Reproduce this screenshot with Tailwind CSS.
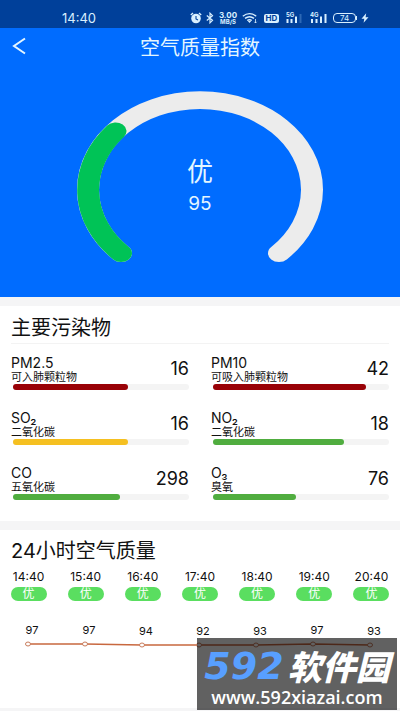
<!DOCTYPE html>
<html lang="zh-CN">
<head>
<meta charset="utf-8">
<meta name="viewport" content="width=device-width, initial-scale=1">
<title>空气质量指数</title>
<script src="https://cdn.jsdelivr.net/npm/@tailwindcss/browser@4"></script>
</head>
<body class="bg-[#f5f5f6] font-['Inter','Noto_Sans_CJK_SC',sans-serif] text-[#111]">
<div class="relative overflow-hidden">
  <!-- Status bar -->
  <div class="flex h-7 items-center justify-between bg-[#00409a] pt-2 pr-[31px] pl-[62px] text-[#d9f0ff]">
    <span class="text-[13px] leading-4">14:40</span>
    <div class="flex items-center">
      <svg class="mr-1 h-3 w-3" viewBox="0 0 12 12"><circle cx="6" cy="6.5" r="4.8" fill="currentColor"/><path d="M.8 3 3 1M11.2 3 9 1" stroke="currentColor" stroke-width="1.4"/><path d="M6 4v3l2 1" fill="none" stroke="#00409a" stroke-width="1.1"/></svg>
      <svg class="mr-1 h-3 w-2" viewBox="0 0 8 12"><path d="M.8 3.5 6.5 8.3 4 10.8V1.2l2.5 2.5L.8 8.5" fill="none" stroke="currentColor" stroke-width="1.2"/></svg>
      <div class="mr-1 w-5 text-center font-bold"><div class="text-[8px] leading-[7px]">3.00</div><div class="text-[6px] leading-[6px]">MB/S</div></div>
      <svg class="mr-[6px] h-3 w-4" viewBox="0 0 16 12"><path d="M.8 4.2Q7.5-1 14.2 4.2M3 6.4Q7.5 3 12 6.4M5.2 8.5Q7.5 7 9.8 8.5" fill="none" stroke="currentColor" stroke-width="1.4"/><path d="m5.8 9 1.7 2 1.7-2z" fill="currentColor"/><path d="M13.5 7v4M12.3 9.8l1.2 1.2 1.2-1.2" fill="none" stroke="currentColor" stroke-width=".8"/></svg>
      <div class="mr-[7px] h-[9px] w-[15px] rounded-xs bg-[#d9f0ff] text-center text-[8px] leading-[9px] font-bold text-[#00409a]">HD</div>
      <svg class="mr-2 h-3 w-4" viewBox="0 0 16 12"><text x="0" y="5" font-size="6" font-weight="700" fill="currentColor">5G</text><path d="M1.5 7v4M5.5 7v4M10 4.5V11" stroke="currentColor" stroke-width="2"/><path d="M14.5 2v9" stroke="#2d68b5" stroke-width="2"/></svg>
      <svg class="mr-[6px] h-3 w-[17px]" viewBox="0 0 17 12"><text x="0" y="5" font-size="6" font-weight="700" fill="currentColor">4G</text><path d="M2 7v4M6.5 7v4M11 4.5V11M15.500 2v9" stroke="currentColor" stroke-width="2"/></svg>
      <div class="h-[10px] w-[23px] rounded-sm border border-current text-center text-[8px] leading-[8px]">74</div>
      <div class="mr-1 h-1 w-px bg-current"></div>
      <svg class="h-[10px] w-2" viewBox="0 0 8 10"><path d="M5.200.3.5 5.700h2.800L2.600 9.700 7.500 4.200H4.600z" fill="currentColor"/></svg>
    </div>
  </div>

  <!-- Gauge -->
  <header class="bg-[#006cff] text-[#e4f6ff]">
    <div class="relative flex h-9 items-center justify-center">
      <button aria-label="返回" class="absolute left-3 h-5 w-4"><svg class="h-5 w-4" viewBox="0 0 16 20"><path d="M13 2.500 2 10l11 7.500" fill="none" stroke="currentColor" stroke-width="2"/></svg></button>
      <h1 class="pt-1 text-[20px] leading-8">空气质量指数</h1>
    </div>
    <div class="relative px-[77px] pt-7 pb-[34px]">
      <svg class="w-full overflow-visible" viewBox="0 0 246 171" fill="none" stroke-linecap="round" stroke-width="22">
        <g transform="translate(123 98) scale(1 .8)">
          <path d="M-79 79A112 112 0 1 1 79 79" stroke="#ececec"/>
          <path d="M-79 79A112 112 0 0 1-84.500-73.500" stroke="#00c356"/>
        </g>
      </svg>
      <div class="absolute inset-x-0 top-[90px] text-center">
        <div class="text-[26px] leading-9">优</div>
        <div class="text-[19px] leading-7">95</div>
      </div>
    </div>
  </header>

  <main class="flex flex-col gap-[9px] pt-[9px]">
    <section class="bg-white px-[11px] pb-[21px]">
      <h2 class="flex h-[38px] items-center border-b border-[#f3f3f3] pt-[6px] text-[20px] leading-8">主要污染物</h2>
      <div class="grid grid-cols-2 gap-x-[22px] gap-y-5 pt-[11px]">
        <div><div class="flex h-7 items-center justify-between"><div><div class="text-[14px] leading-4">PM2.5</div><div class="text-[11px] leading-3">可入肺颗粒物</div></div><div class="text-[18px] leading-6">16</div></div><div class="mt-px ml-[2px] h-[6px] rounded-sm bg-[#f4f4f4]"><div class="h-full rounded-full bg-[#990207]" style="width:65.5%"></div></div></div>
        <div><div class="flex h-7 items-center justify-between"><div><div class="text-[14px] leading-4">PM10</div><div class="text-[11px] leading-3">可吸入肺颗粒物</div></div><div class="text-[18px] leading-6">42</div></div><div class="mt-px ml-[2px] h-[6px] rounded-sm bg-[#f4f4f4]"><div class="h-full rounded-full bg-[#990207]" style="width:87%"></div></div></div>
        <div><div class="flex h-7 items-center justify-between"><div><div class="text-[14px] leading-4">SO₂</div><div class="text-[11px] leading-3">二氧化碳</div></div><div class="text-[18px] leading-6">16</div></div><div class="mt-px ml-[2px] h-[6px] rounded-sm bg-[#f4f4f4]"><div class="h-full rounded-full bg-[#f5c021]" style="width:65.5%"></div></div></div>
        <div><div class="flex h-7 items-center justify-between"><div><div class="text-[14px] leading-4">NO₂</div><div class="text-[11px] leading-3">二氧化碳</div></div><div class="text-[18px] leading-6">18</div></div><div class="mt-px ml-[2px] h-[6px] rounded-sm bg-[#f4f4f4]"><div class="h-full rounded-full bg-[#50ad3f]" style="width:74.5%"></div></div></div>
        <div><div class="flex h-7 items-center justify-between"><div><div class="text-[14px] leading-4">CO</div><div class="text-[11px] leading-3">五氧化碳</div></div><div class="text-[18px] leading-6">298</div></div><div class="mt-px ml-[2px] h-[6px] rounded-sm bg-[#f4f4f4]"><div class="h-full rounded-full bg-[#50ad3f]" style="width:61%"></div></div></div>
        <div><div class="flex h-7 items-center justify-between"><div><div class="text-[14px] leading-4">O₃</div><div class="text-[11px] leading-3">臭氧</div></div><div class="text-[18px] leading-6">76</div></div><div class="mt-px ml-[2px] h-[6px] rounded-sm bg-[#f4f4f4]"><div class="h-full rounded-full bg-[#50ad3f]" style="width:47%"></div></div></div>
      </div>
    </section>

    <section class="mb-[3px] bg-white pt-[5px]">
      <h2 class="px-[11px] text-[20px] leading-8">24小时空气质量</h2>
      <div class="grid grid-cols-7 pt-[3px] text-[12px]">
        <div class="flex flex-col items-center gap-[3px]"><span class="leading-[14px]">14:40</span><span class="w-9 rounded-full bg-[#5ade60] text-center leading-[14px] text-white">优</span></div>
        <div class="flex flex-col items-center gap-[3px]"><span class="leading-[14px]">15:40</span><span class="w-9 rounded-full bg-[#5ade60] text-center leading-[14px] text-white">优</span></div>
        <div class="flex flex-col items-center gap-[3px]"><span class="leading-[14px]">16:40</span><span class="w-9 rounded-full bg-[#5ade60] text-center leading-[14px] text-white">优</span></div>
        <div class="flex flex-col items-center gap-[3px]"><span class="leading-[14px]">17:40</span><span class="w-9 rounded-full bg-[#5ade60] text-center leading-[14px] text-white">优</span></div>
        <div class="flex flex-col items-center gap-[3px]"><span class="leading-[14px]">18:40</span><span class="w-9 rounded-full bg-[#5ade60] text-center leading-[14px] text-white">优</span></div>
        <div class="flex flex-col items-center gap-[3px]"><span class="leading-[14px]">19:40</span><span class="w-9 rounded-full bg-[#5ade60] text-center leading-[14px] text-white">优</span></div>
        <div class="flex flex-col items-center gap-[3px]"><span class="leading-[14px]">20:40</span><span class="w-9 rounded-full bg-[#5ade60] text-center leading-[14px] text-white">优</span></div>
      </div>
      <svg class="block w-full" viewBox="0 0 400 107">
        <polyline points="28,43 85,43 142,44 199,44 256,44 313,43 370,44" fill="none" stroke="#c8683f" stroke-width="1.700"/>
        <g fill="#fff" stroke="#c87a5a"><ellipse cx="28" cy="43" rx="2.500" ry="2"/><ellipse cx="85" cy="43" rx="2.500" ry="2"/><ellipse cx="142" cy="44" rx="2.500" ry="2"/><ellipse cx="199" cy="44" rx="2.500" ry="2"/><ellipse cx="256" cy="44" rx="2.500" ry="2"/><ellipse cx="313" cy="43" rx="2.500" ry="2"/><ellipse cx="370" cy="44" rx="2.500" ry="2"/></g>
        <g font-size="11" text-anchor="middle" fill="#111"><text x="32" y="33">97</text><text x="89" y="33">97</text><text x="146" y="34">94</text><text x="203" y="34">92</text><text x="260" y="34">93</text><text x="317" y="33">97</text><text x="374" y="34">93</text></g>
      </svg>
    </section>
  </main>

  <!-- Site badge -->
  <div class="absolute right-[3px] bottom-px flex h-[72px] w-[200px] flex-col items-center bg-black/62 pt-[10px] whitespace-nowrap">
    <div class="flex items-center leading-9 font-bold italic"><span class="font-['DejaVu_Sans'] text-[38px] text-[#589fff]">592</span><span class="ml-1 font-['Noto_Sans_CJK_SC'] text-[34px] font-black text-white">软件园</span></div>
    <div class="mt-px font-['Open_Sans'] text-[18px] leading-6 font-semibold text-white">www.592xiazai.com</div>
  </div>
</div>
</body>
</html>
